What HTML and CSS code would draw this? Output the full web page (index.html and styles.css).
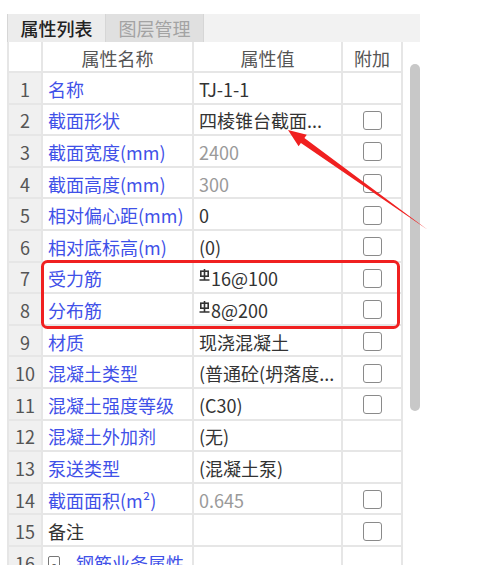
FILE: index.html
```html
<!DOCTYPE html>
<html lang="zh-CN">
<head>
  <meta charset="UTF-8">
  <title>属性列表</title>
  <link rel="stylesheet" href="styles.css">
</head>
<body>
<div class="panel">
  <div class="tabs">
    <div class="tab active">属性列表</div>
    <div class="tab">图层管理</div>
  </div>

  <div class="body-row">
    <div class="grid">
      <div class="c num head"></div>
      <div class="c center head">属性名称</div>
      <div class="c center head">属性值</div>
      <div class="c center head">附加</div>

      <div class="c num">1</div><div class="c name">名称</div><div class="c val">TJ-1-1</div><div class="c box"></div>
      <div class="c num">2</div><div class="c name">截面形状</div><div class="c val">四棱锥台截面...</div><div class="c box"><span class="cb"></span></div>
      <div class="c num">3</div><div class="c name">截面宽度(mm)</div><div class="c val dim">2400</div><div class="c box"><span class="cb"></span></div>
      <div class="c num">4</div><div class="c name">截面高度(mm)</div><div class="c val dim">300</div><div class="c box"><span class="cb"></span></div>
      <div class="c num">5</div><div class="c name">相对偏心距(mm)</div><div class="c val">0</div><div class="c box"><span class="cb"></span></div>
      <div class="c num">6</div><div class="c name">相对底标高(m)</div><div class="c val">(0)</div><div class="c box"><span class="cb"></span></div>
      <div class="c num">7</div><div class="c name">受力筋</div>
      <div class="c val"><svg class="rebar" width="11" height="12" viewBox="0 0 11 12"><rect x="1.8" y="2.2" width="7.4" height="5" fill="none" stroke="#333" stroke-width="1.6"/><path d="M5.5 0v11M0.5 11h10" stroke="#333" stroke-width="1.6" fill="none"/></svg>16@100</div>
      <div class="c box"><span class="cb"></span></div>
      <div class="c num">8</div><div class="c name">分布筋</div>
      <div class="c val"><svg class="rebar" width="11" height="12" viewBox="0 0 11 12"><rect x="1.8" y="2.2" width="7.4" height="5" fill="none" stroke="#333" stroke-width="1.6"/><path d="M5.5 0v11M0.5 11h10" stroke="#333" stroke-width="1.6" fill="none"/></svg>8@200</div>
      <div class="c box"><span class="cb"></span></div>
      <div class="c num">9</div><div class="c name">材质</div><div class="c val">现浇混凝土</div><div class="c box"><span class="cb"></span></div>
      <div class="c num">10</div><div class="c name">混凝土类型</div><div class="c val">(普通砼(坍落度...</div><div class="c box"><span class="cb"></span></div>
      <div class="c num">11</div><div class="c name">混凝土强度等级</div><div class="c val">(C30)</div><div class="c box"><span class="cb"></span></div>
      <div class="c num">12</div><div class="c name">混凝土外加剂</div><div class="c val">(无)</div><div class="c box"></div>
      <div class="c num">13</div><div class="c name">泵送类型</div><div class="c val">(混凝土泵)</div><div class="c box"></div>
      <div class="c num">14</div><div class="c name">截面面积(m²)</div><div class="c val dim">0.645</div><div class="c box"><span class="cb"></span></div>
      <div class="c num">15</div><div class="c name plain">备注</div><div class="c val"></div><div class="c box"><span class="cb"></span></div>
      <div class="c num">16</div><div class="c name"><span class="fold">-</span>钢筋业务属性</div><div class="c val"></div><div class="c box"></div>
    </div>
    <div class="scroll"></div>
  </div>
</div>

<!-- 标注：红框和箭头 -->
<svg class="marks" width="478" height="565" viewBox="0 0 478 565">
  <rect x="42.5" y="261.5" width="356" height="66" rx="5" fill="none" stroke="#f02020" stroke-width="3"/>
  <polygon points="288,130 298.6,146.2 300.9,143 428,230 304.4,138.1 306.8,134.8" fill="#f02020"/>
</svg>
</body>
</html>
```

FILE: styles.css
```css
body {
  margin: 0;
  background: #fff;
  font-family: "Noto Sans CJK SC", sans-serif;
  font-size: 18px;
  color: #333;
  height: 565px;
  overflow: hidden;
  position: relative;
}

.panel {
  margin: 14px 0 0 7px;
  width: 413px;
}

.tabs {
  display: flex;
  height: 28px;
  background: #f2f2f2;
}

.tab {
  width: 97px;
  display: flex;
  align-items: center;
  justify-content: center;
  background: #e0e0e0;
  color: #a3a3a3;
  border-right: 1px solid #d6d6d6;
  line-height: 1;
}

.tab.active {
  background: #ececec;
  color: #222;
  border-left: 1px solid #d6d6d6;
  font-weight: 500;
}

.body-row {
  display: flex;
  align-items: flex-start;
}

.grid {
  display: grid;
  grid-template-columns: 34px 151px 149px 60px;
  grid-template-rows: 31px;
  grid-auto-rows: 31.6px;
  border-left: 2px solid #e6e6e6;
}

.c {
  box-sizing: border-box;
  border-right: 2px solid #e6e6e6;
  border-bottom: 2px solid #e6e6e6;
  display: flex;
  align-items: center;
  white-space: nowrap;
  overflow: hidden;
  line-height: 1;
  padding-top: 2px;
}

.head {
  color: #555;
  background: #fff;
}

.center {
  justify-content: center;
}

.num {
  justify-content: center;
  background: #f0f0f0;
  color: #555;
}

.num.head {
  background: #fff;
}

.name {
  padding-left: 5px;
  color: #3f51e8;
}

.name.plain {
  color: #333;
}

.val {
  padding-left: 5px;
  color: #333;
}

.val.dim {
  color: #9a9a9a;
}

.box {
  justify-content: center;
}

.cb {
  width: 17px;
  height: 17px;
  border: 1.5px solid #8a8a8a;
  border-radius: 3px;
  background: #fff;
}

.rebar {
  margin-right: 1px;
  position: relative;
  top: -3px;
}

.fold {
  display: inline-flex;
  align-items: center;
  justify-content: center;
  width: 10px;
  height: 12px;
  border: 1px solid #777;
  border-radius: 2px;
  font-size: 12px;
  color: #555;
  margin-right: 16px;
}

.scroll {
  width: 11px;
  height: 347px;
  margin: 22px 0 0 7px;
  background: #c8c8c8;
  border-radius: 6px;
}

.marks {
  position: absolute;
  top: 0;
  left: 0;
  pointer-events: none;
}
```
